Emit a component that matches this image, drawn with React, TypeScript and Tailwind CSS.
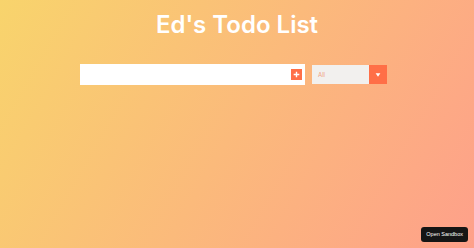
export default function App() {
  return (
    <div className="relative w-full h-[248px] overflow-hidden bg-[linear-gradient(120deg,#f8d46c,#fea08a)] text-white font-['Inter','Liberation_Sans',sans-serif]">
      <header className="flex justify-center pt-[7px]">
        <h1 className="text-[24px] font-semibold leading-[36px]">Ed's Todo List</h1>
      </header>
      <div className="flex justify-center items-center mt-[21px] gap-[7px] pr-[7px]">
        <form className="flex items-center bg-white w-[225px] h-[21px] pr-[3px]">
          <input type="text" className="flex-1 h-full outline-none px-2 text-[10px] text-black bg-transparent" />
          <button type="button" className="w-[11px] h-[11px] bg-[#ff6f47] flex items-center justify-center">
            <svg viewBox="0 0 10 10" className="w-[7px] h-[7px]">
              <path d="M5 1v8M1 5h8" stroke="#fff" strokeWidth="2" />
            </svg>
          </button>
        </form>
        <div className="flex h-[19px] w-[75px]">
          <div className="flex-1 bg-[#f2f0ee] flex items-center pl-[6px] text-[6px] text-[#f0a080]">All</div>
          <div className="w-[18px] bg-[#ff6f47] flex items-center justify-center">
            <svg viewBox="0 0 10 10" className="w-[6px] h-[6px]">
              <path d="M1 2h8L5 8z" fill="#fff" />
            </svg>
          </div>
        </div>
      </div>
      <button className="absolute right-[6px] bottom-[6px] bg-[#151515] text-white text-[5.5px] rounded-[3px] px-[5px] h-[15px] flex items-center font-['Liberation_Sans',sans-serif]">
        Open Sandbox
      </button>
    </div>
  )
}
